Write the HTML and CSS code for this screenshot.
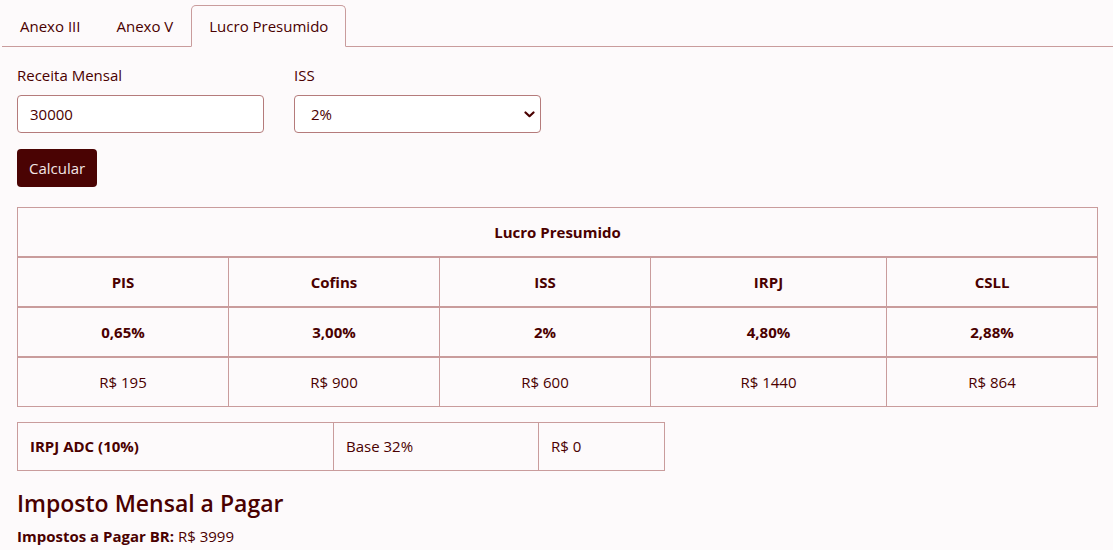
FILE: index.html
```html
<!DOCTYPE html>
<html lang="pt-BR">
<head>
    <meta charset="UTF-8">
    <meta name="viewport" content="width=device-width, initial-scale=1.0">
    <title>Calculadora de Impostos</title>
    <link rel="stylesheet" href="styles.css">
</head>
<body>

<ul class="tabs">
    <li><a href="#" class="tab">Anexo III</a></li>
    <li><a href="#" class="tab">Anexo V</a></li>
    <li><a href="#" class="tab active">Lucro Presumido</a></li>
</ul>

<div class="container">
    <div class="form-row">
        <div class="field">
            <label for="receita">Receita Mensal</label>
            <input type="text" id="receita" class="input" value="30000">
        </div>
        <div class="field">
            <label for="iss">ISS</label>
            <div class="select-wrap">
                <select id="iss" class="input select">
                    <option>2%</option>
                    <option>3%</option>
                    <option>5%</option>
                </select>
                <svg class="chevron" width="11" height="7" viewBox="0 0 11 7">
                    <path d="M1.5 1.5 L5.5 5.2 L9.5 1.5" fill="none" stroke="currentColor" stroke-width="2.2" stroke-linecap="round" stroke-linejoin="round"/>
                </svg>
            </div>
        </div>
    </div>

    <button class="btn">Calcular</button>

    <table class="grid main-table">
        <colgroup>
            <col class="col-std">
            <col class="col-std">
            <col class="col-std">
            <col class="col-wide">
            <col class="col-std">
        </colgroup>
        <thead>
            <tr><th colspan="5">Lucro Presumido</th></tr>
        </thead>
        <tbody>
            <tr class="bold">
                <td>PIS</td>
                <td>Cofins</td>
                <td>ISS</td>
                <td>IRPJ</td>
                <td>CSLL</td>
            </tr>
            <tr class="bold">
                <td>0,65%</td>
                <td>3,00%</td>
                <td>2%</td>
                <td>4,80%</td>
                <td>2,88%</td>
            </tr>
            <tr>
                <td>R$ 195</td>
                <td>R$ 900</td>
                <td>R$ 600</td>
                <td>R$ 1440</td>
                <td>R$ 864</td>
            </tr>
        </tbody>
    </table>

    <table class="grid adc-table">
        <colgroup>
            <col class="adc-name-col">
            <col class="adc-base-col">
            <col class="adc-value-col">
        </colgroup>
        <tr>
            <td class="adc-name">IRPJ ADC (10%)</td>
            <td>Base 32%</td>
            <td>R$ 0</td>
        </tr>
    </table>

    <h2>Imposto Mensal a Pagar</h2>
    <p class="total"><strong>Impostos a Pagar BR:</strong> R$ 3999</p>
</div>

</body>
</html>
```

FILE: styles.css
```css
body {
    font-family: "Open Sans", "Noto Sans", sans-serif;
    font-size: 15px;
    margin: 0;
    padding: 0;
    background-color: #fdfafb;
    color: #4a0000; /* dark wine text */
}

/* tabs */
.tabs {
    list-style: none;
    display: flex;
    margin: 5px 0 0 2px;
    padding: 0;
    border-bottom: 1px solid #c99c9c;
}
.tab {
    display: block;
    padding: 8px 17px;
    line-height: 24px;
    color: #4a0000;
    text-decoration: none;
    border: 1px solid transparent;
    border-radius: 5px 5px 0 0;
    margin-bottom: -1px;
}
.tab.active {
    background-color: #fdfafb;
    border-color: #c99c9c #c99c9c #fdfafb;
}

.container {
    padding: 0 16px 0 17px;
}

/* form */
.form-row {
    display: flex;
    gap: 30px;
    margin-top: 16px;
}
.field {
    width: 247px;
}
.field label {
    display: block;
    line-height: 24px;
    margin-bottom: 8px;
}
.input {
    box-sizing: border-box;
    width: 100%;
    height: 38px;
    padding: 6px 12px;
    font-family: inherit;
    font-size: 15px;
    color: #4a0000;
    background-color: #fff;
    border: 1px solid #b57b7b;
    border-radius: 4px;
}
.select-wrap {
    position: relative;
}
.select {
    appearance: none;
    -webkit-appearance: none;
    padding-left: 16px;
}
.chevron {
    position: absolute;
    right: 6px;
    top: 16px;
    color: #4a0000;
    pointer-events: none;
}

.btn {
    display: block;
    margin-top: 16px;
    height: 38px;
    padding: 0 12px;
    font-family: inherit;
    font-size: 15px;
    color: #f3e6e6;
    background-color: #4a0303;
    border: none;
    border-radius: 4px;
    cursor: pointer;
}

/* tables */
.grid {
    border-collapse: collapse;
    text-align: center;
}
.grid td,
.grid th {
    border: 1px solid #c99c9c;
    padding: 12px;
    line-height: 24px;
    font-size: 15px;
}
.main-table {
    width: 100%;
    table-layout: fixed;
    margin-top: 20px;
}
.col-std {
    width: 211px;
}
.col-wide {
    width: 236px;
}
.main-table th {
    border-bottom-width: 2px;
}
.main-table tbody tr.bold td {
    border-bottom-width: 2px;
}
.bold td {
    font-weight: 700;
}
.adc-table {
    width: 647px;
    table-layout: fixed;
    margin-top: 15px;
    text-align: left;
}
.adc-table td {
    padding: 11px 12px 12px;
}
.adc-name-col {
    width: 316px;
}
.adc-base-col {
    width: 205px;
}
.adc-value-col {
    width: 126px;
}
.adc-name {
    font-weight: 700;
}

h2 {
    font-size: 23px;
    font-weight: 600;
    margin: 17px 0 6px;
    line-height: 30px;
}
.total {
    margin: 0;
    line-height: 24px;
}
```
